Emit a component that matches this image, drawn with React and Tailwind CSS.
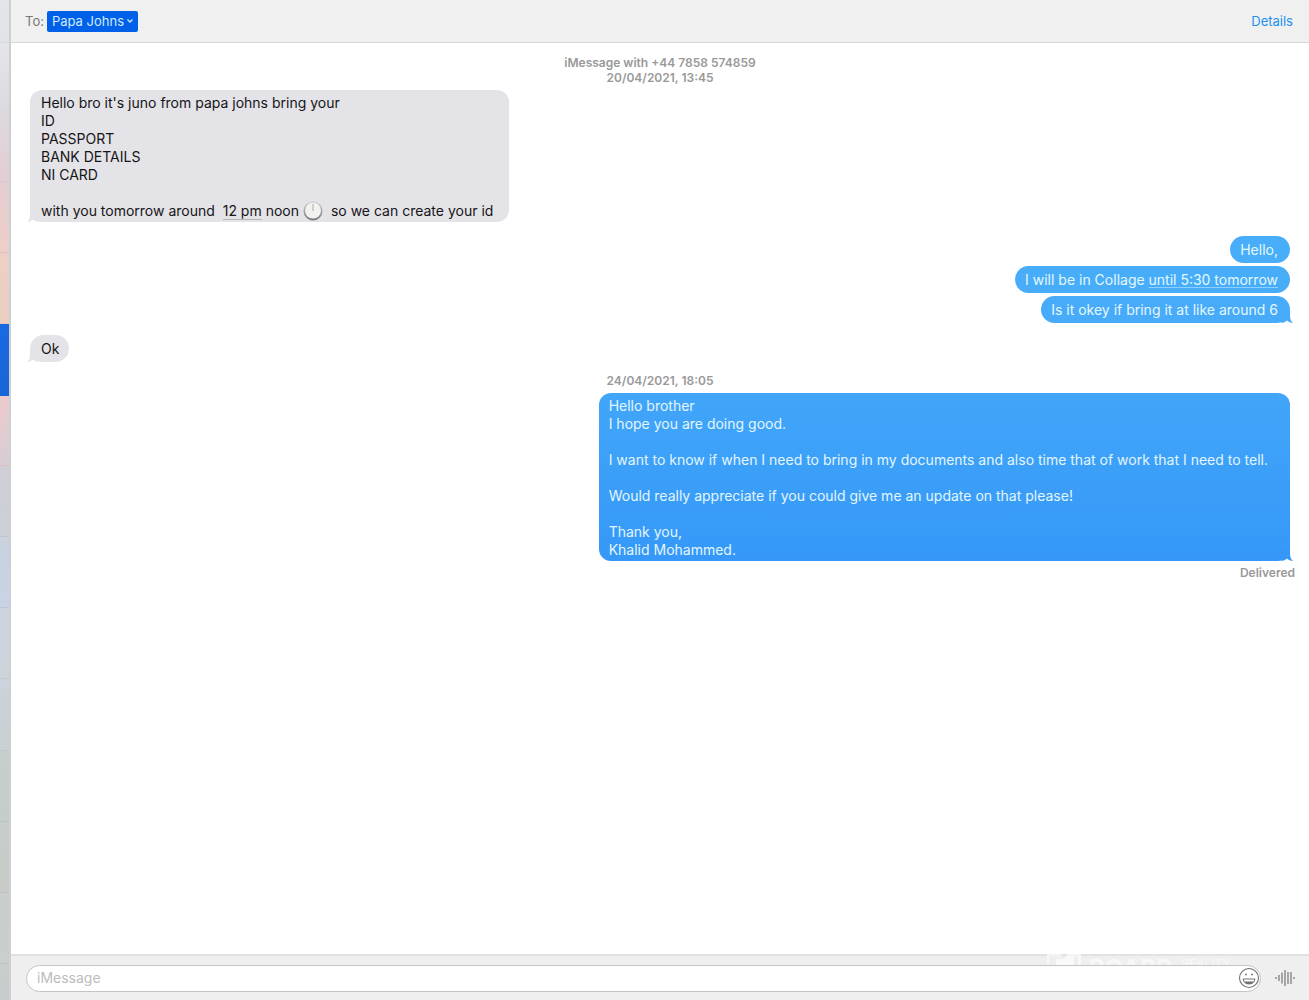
import React from "react";

const rows = [
  "h-[43px] from-[#e3e5e9] to-[#e2e3e8]",
  "h-[68px] from-[#e4e5ea] to-[#dcdae0]",
  "h-[71px] from-[#dcd9df] to-[#e4cdd3]",
  "h-[71px] from-[#e4ced2] to-[#edcfc8]",
  "h-[71px] from-[#ecd0c4] to-[#eccfc1]",
  "h-[72px] from-[#1a6ae0] to-[#1765d8]",
  "h-[70px] from-[#eccacb] to-[#d8cdd5]",
  "h-[71px] from-[#d0ced6] to-[#cbd0d9]",
  "h-[71px] from-[#c9d2de] to-[#c9d3e6]",
  "h-[71px] from-[#ccd4dd] to-[#cdd4dc]",
  "h-[72px] from-[#cbd3dc] to-[#c8d0d1]",
  "h-[71px] from-[#c7cfcd] to-[#c5cdc9]",
  "h-[71px] from-[#c6cdca] to-[#c8cbc8]",
  "h-[71px] from-[#c9cdcb] to-[#cacfcd]",
  "h-[71px] from-[#c9cecd] to-[#c5cacb]",
];

function ConversationEdge() {
  return (
    <aside className="h-full w-[11px] shrink-0 overflow-hidden border-r-2 border-[#ccd0d4]">
      {rows.map((row) => (
        <div key={row} className={"border-b border-black/5 bg-linear-to-b " + row} />
      ))}
    </aside>
  );
}

const tailPlace = {
  left: "absolute bottom-0 -left-[3px] h-3 w-4 -scale-x-100",
  right: "absolute bottom-0 -right-[3px] h-3 w-4",
};

function Tail({ side, color }) {
  return (
    <svg aria-hidden="true" viewBox="0 0 16 12" className={tailPlace[side]}>
      <path fill={color} d="M4 0H13V4C13 8 14 10.500 16 12H4Z" />
      <path fill="#fff" d="M2 12C6 12 8.500 11.200 10 9.500C11.500 11 13.500 11.600 16 12Z" />
    </svg>
  );
}

function Clock() {
  return (
    <svg role="img" aria-label="twelve o'clock" viewBox="0 0 20 20" className="mx-1 inline-block size-5 align-middle">
      <defs>
        <linearGradient id="rim" x1="0" y1="0" x2="0" y2="1">
          <stop offset="0" stopColor="#c9cccc" />
          <stop offset="1" stopColor="#777b7b" />
        </linearGradient>
      </defs>
      <circle cx="10" cy="10" r="9.500" fill="url(#rim)" />
      <circle cx="10" cy="9.500" r="8" fill="#f1f2f0" />
      <path d="M10 3V10" stroke="#aaa" strokeWidth="1" />
    </svg>
  );
}

function Waveform() {
  const bars = [[1, 2], [4, 6], [7, 11], [10, 16], [13, 12], [16, 12], [19, 2]];
  return (
    <svg aria-hidden="true" viewBox="0 0 20 18" className="h-[18px] w-5">
      {bars.map(([x, h]) => (
        <path key={x} d={`M${x} ${9 - h / 2}V${9 + h / 2}`} stroke="#a2a2a2" strokeWidth="1.900" />
      ))}
    </svg>
  );
}

function Smiley() {
  return (
    <svg aria-hidden="true" viewBox="0 0 22 22" className="size-[22px]" fill="none" stroke="#707070">
      <circle cx="11" cy="11" r="9.500" strokeWidth="1.100" />
      <circle cx="8" cy="7.500" r=".9" fill="#707070" stroke="none" />
      <circle cx="14" cy="7.500" r=".9" fill="#707070" stroke="none" />
      <path d="M5 12H17C16.500 15.400 14 17 11 17S5.500 15.400 5 12Z" strokeWidth="1" />
      <path d="M6 14.500H16C15 16.400 13 17 11 17S7 16.400 6 14.500Z" fill="#707070" stroke="none" />
    </svg>
  );
}

export default function App() {
  return (
    <div className="flex h-screen overflow-hidden bg-white font-['Inter',sans-serif] text-[14px] leading-[18px] text-[#151517]">
      <ConversationEdge />
      <div className="flex min-w-0 flex-1 flex-col">
        <header className="flex h-[43px] shrink-0 items-center border-b border-[#d8d8d8] bg-[#f0f0f0] pr-4 pl-3.5 text-[13px]">
          <span className="mr-[3px] text-[#777]">To:</span>
          <button className="flex h-[21px] items-center gap-[3px] rounded-[2px] bg-[#0061e8] px-[5px] text-[#cfe9ff]">
            Papa Johns
            <svg aria-hidden="true" viewBox="0 0 6 4" className="h-1 w-1.5" fill="none" stroke="currentColor" strokeWidth="1.300">
              <path d="M.5.500 3 3 5.500.500" />
            </svg>
          </button>
          <button className="ml-auto text-[#2090f0]">Details</button>
        </header>

        <main className="flex min-h-0 flex-1 flex-col overflow-hidden px-[19px]">
          <div className="pt-3 text-center text-[12px] leading-[15px] font-semibold text-[#999]">
            <p>iMessage with +44 7858 574859</p>
            <p>20/04/2021, 13:45</p>
          </div>

          <div className="relative mt-[5px] self-start rounded-[12px] bg-[#e4e3e8] pt-1 pr-4 pb-0.5 pl-[11px] whitespace-pre">
            <Tail side="left" color="#e4e3e8" />
            <div className="relative">
              <p>Hello bro it's juno from papa johns bring your</p>
              <p>ID</p>
              <p>PASSPORT</p>
              <p>BANK DETAILS</p>
              <p>NI CARD</p>
              <p className="mt-[18px] flex h-[18px] items-center">
                {"with you tomorrow around  "}
                <span className="border-b border-[#b5b5ba] leading-4">12 pm</span>
                {" noon"}
                <Clock />
                {" so we can create your id"}
              </p>
            </div>
          </div>

          <div className="mt-3.5 flex flex-col items-end gap-[3px] text-[#e2f8ff]">
            <p className="flex h-[27px] items-center rounded-full bg-[#49aef9] pr-3 pl-2.5">Hello,</p>
            <p className="flex h-[27px] items-center rounded-full bg-[#48adf9] pr-3 pl-2.5 whitespace-pre">
              {"I will be in Collage "}
              <span className="underline decoration-[#8ed0fc] decoration-1 underline-offset-2">until 5:30 tomorrow</span>
            </p>
            <div className="relative flex h-[27px] items-center rounded-full bg-[#47abf9] pr-3 pl-2.5">
              <Tail side="right" color="#47abf9" />
              <p className="relative">Is it okey if bring it at like around 6</p>
            </div>
          </div>

          <div className="relative mt-3 flex h-[27px] items-center self-start rounded-full bg-[#e4e3e8] pr-2.5 pl-[11px]">
            <Tail side="left" color="#e4e3e8" />
            <p className="relative">Ok</p>
          </div>

          <p className="mt-[11px] text-center text-[12px] leading-[15px] font-semibold text-[#999]">24/04/2021, 18:05</p>

          <div className="relative mt-[5px] self-end rounded-[12px] bg-linear-to-b from-[#41a6f9] to-[#3598f8] pt-1 pr-[22px] pb-0.5 pl-2.5 text-[#e2f6ff]">
            <Tail side="right" color="#3598f8" />
            <div className="relative">
              <p>Hello brother</p>
              <p>I hope you are doing good.</p>
              <p className="mt-[18px]">I want to know if when I need to bring in my documents and also time that of work that I need to tell.</p>
              <p className="mt-[18px]">Would really appreciate if you could give me an update on that please!</p>
              <p className="mt-[18px]">Thank you,</p>
              <p>Khalid Mohammed.</p>
            </div>
          </div>
          <p className="-mr-[5px] mt-1 self-end text-[12px] leading-[15px] font-semibold text-[#999]">Delivered</p>
        </main>

        <footer className="relative flex h-[46px] shrink-0 items-center gap-3.5 border-t-2 border-[#e2e2e2] bg-[#efefef] pr-3.5 pl-[15px]">
          <div aria-hidden="true" className="absolute -top-0.5 right-12 flex w-[214px] items-start gap-2 text-white/60">
            <svg viewBox="0 0 34 16" className="h-4 w-[34px] shrink-0" fill="currentColor">
              <path d="M0 0H14V2H2V16H0ZM9 5H18V2H27V12H9ZM20 0H34V16H31V2H20Z" />
            </svg>
            <span className="mt-[3px] text-[24px] leading-6 font-bold">BOARD</span>
            <span className="mt-1 text-[12px] leading-3">REALITY</span>
          </div>
          <div className="relative flex h-[27px] flex-1 items-center rounded-full border border-[#c4c4c4] bg-white pl-2.5">
            <input aria-label="iMessage" placeholder="iMessage" className="min-w-0 flex-1 bg-transparent outline-none placeholder:text-[#bcbcbc]" />
            <button aria-label="Emoji"><Smiley /></button>
          </div>
          <button aria-label="Record audio"><Waveform /></button>
        </footer>
      </div>
    </div>
  );
}
